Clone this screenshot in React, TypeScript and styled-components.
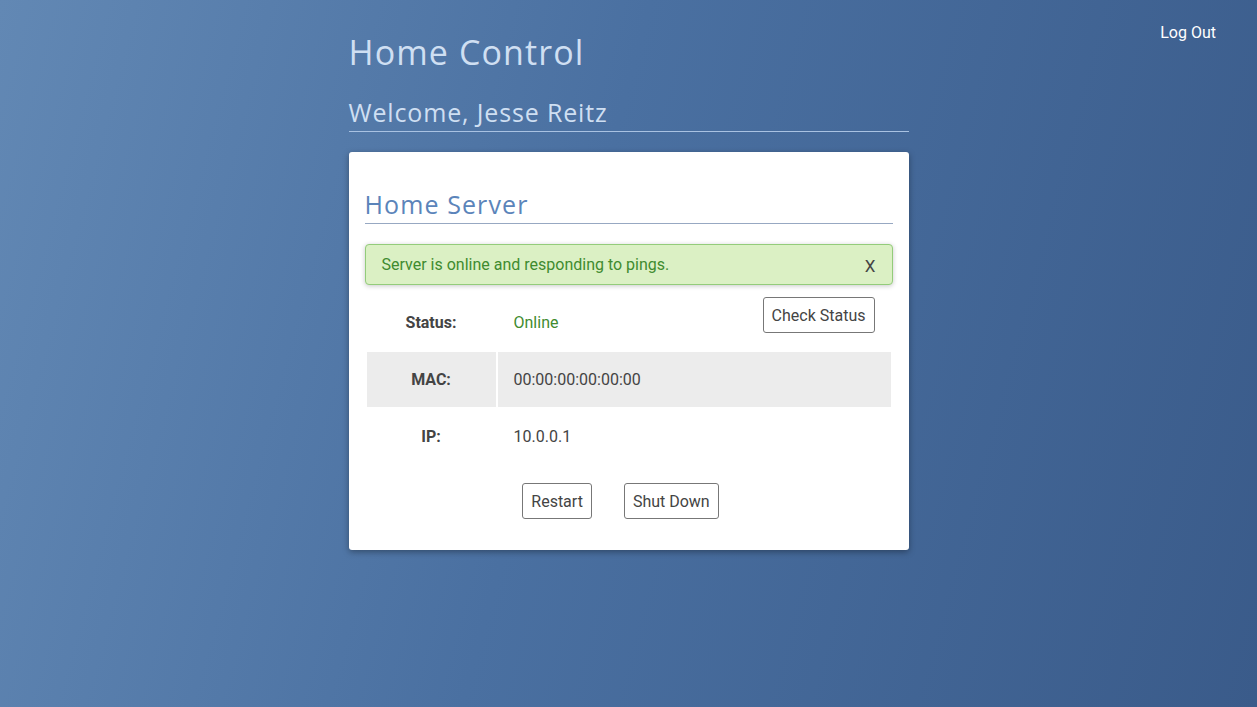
import React from "react";
import styled, { createGlobalStyle } from "styled-components";

const Global = createGlobalStyle`
  html, body { margin: 0; padding: 0; }
  body {
    font-family: Roboto, "Liberation Sans", sans-serif;
    font-size: 16px;
    color: #444;
  }
  * { box-sizing: border-box; }
`;

const Page = styled.div`
  min-height: 100vh;
  background: linear-gradient(105deg, #6288b4 0%, #4a70a1 45%, #3a5b8a 100%);
  position: relative;
  padding-top: 28px;
`;

const LogOut = styled.a`
  position: absolute;
  top: 23px;
  right: 41px;
  color: #ffffff;
  font-size: 16px;
  text-decoration: none;
  cursor: pointer;
`;

const Container = styled.div`
  width: 560px;
  margin: 0 auto;
`;

const Title = styled.h1`
  font-family: "Open Sans", "DejaVu Sans", sans-serif;
  font-weight: 400;
  font-size: 34px;
  line-height: 48px;
  letter-spacing: 1.1px;
  margin: 0 0 19px;
  color: #cfdff2;
`;

const Welcome = styled.h2`
  font-family: "Open Sans", "DejaVu Sans", sans-serif;
  font-weight: 400;
  font-size: 25px;
  line-height: 34px;
  letter-spacing: 0.85px;
  margin: 0 0 20px;
  padding-bottom: 2px;
  color: #cfdff2;
  border-bottom: 1px solid #a9c2e2;
`;

const Card = styled.div`
  background: #ffffff;
  border-radius: 3px;
  box-shadow: 0 2px 6px rgba(0, 0, 0, 0.35);
  padding: 28px 16px 31px;
`;

const CardTitle = styled.h3`
  font-family: "Open Sans", "DejaVu Sans", sans-serif;
  font-weight: 400;
  font-size: 25px;
  line-height: 36px;
  letter-spacing: 1.1px;
  margin: 0 0 20px;
  padding: 6px 0 1px;
  color: #5b84ba;
  border-bottom: 1px solid #97a8c2;
`;

const Alert = styled.div`
  display: flex;
  align-items: center;
  justify-content: space-between;
  height: 41px;
  padding: 0 16px;
  background: #dbf0c4;
  border: 1px solid #93cc7a;
  border-radius: 4px;
  box-shadow: 0 1px 5px rgba(0, 0, 0, 0.22);
  color: #3f8b2f;
  font-size: 16px;
  margin-bottom: 8px;
`;

const Close = styled.span`
  color: #444;
  font-size: 17px;
  margin-top: 2px;
  cursor: pointer;
`;

const Table = styled.table`
  width: 100%;
  border-collapse: separate;
  border-spacing: 2px;
  margin-bottom: 17px;
`;

const Row = styled.tr<{ $shaded?: boolean }>`
  background: ${(p) => (p.$shaded ? "#ececec" : "transparent")};
  height: 55px;
`;

const Label = styled.th`
  width: 129px;
  font-weight: 700;
  text-align: center;
  color: #444;
`;

const Value = styled.td<{ $online?: boolean }>`
  padding: 0 16px;
  color: ${(p) => (p.$online ? "#3f8b2f" : "#444")};
  vertical-align: middle;
`;

const ValueInner = styled.div`
  display: flex;
  align-items: center;
  justify-content: space-between;
`;

const Btn = styled.button<{ $up?: boolean }>`
  font-family: Roboto, "Liberation Sans", sans-serif;
  font-size: 16px;
  color: #444;
  background: #ffffff;
  border: 1px solid #777;
  border-radius: 3px;
  height: 36px;
  padding: 0 8px;
  cursor: pointer;
  ${(p) => (p.$up ? "margin-top: -15px;" : "")}
`;

const Actions = styled.div`
  display: flex;
  justify-content: center;
  gap: 32px;
  padding-right: 16px;
`;

export default function App() {
  return (
    <>
      <Global />
      <Page>
        <LogOut>Log Out</LogOut>
        <Container>
          <Title>Home Control</Title>
          <Welcome>Welcome, Jesse Reitz</Welcome>
          <Card>
            <CardTitle>Home Server</CardTitle>
            <Alert>
              <span>Server is online and responding to pings.</span>
              <Close>X</Close>
            </Alert>
            <Table>
              <tbody>
                <Row>
                  <Label>Status:</Label>
                  <Value $online>
                    <ValueInner>
                      <span>Online</span>
                      <Btn $up>Check Status</Btn>
                    </ValueInner>
                  </Value>
                </Row>
                <Row $shaded>
                  <Label>MAC:</Label>
                  <Value>00:00:00:00:00:00</Value>
                </Row>
                <Row>
                  <Label>IP:</Label>
                  <Value>10.0.0.1</Value>
                </Row>
              </tbody>
            </Table>
            <Actions>
              <Btn>Restart</Btn>
              <Btn>Shut Down</Btn>
            </Actions>
          </Card>
        </Container>
      </Page>
    </>
  );
}
